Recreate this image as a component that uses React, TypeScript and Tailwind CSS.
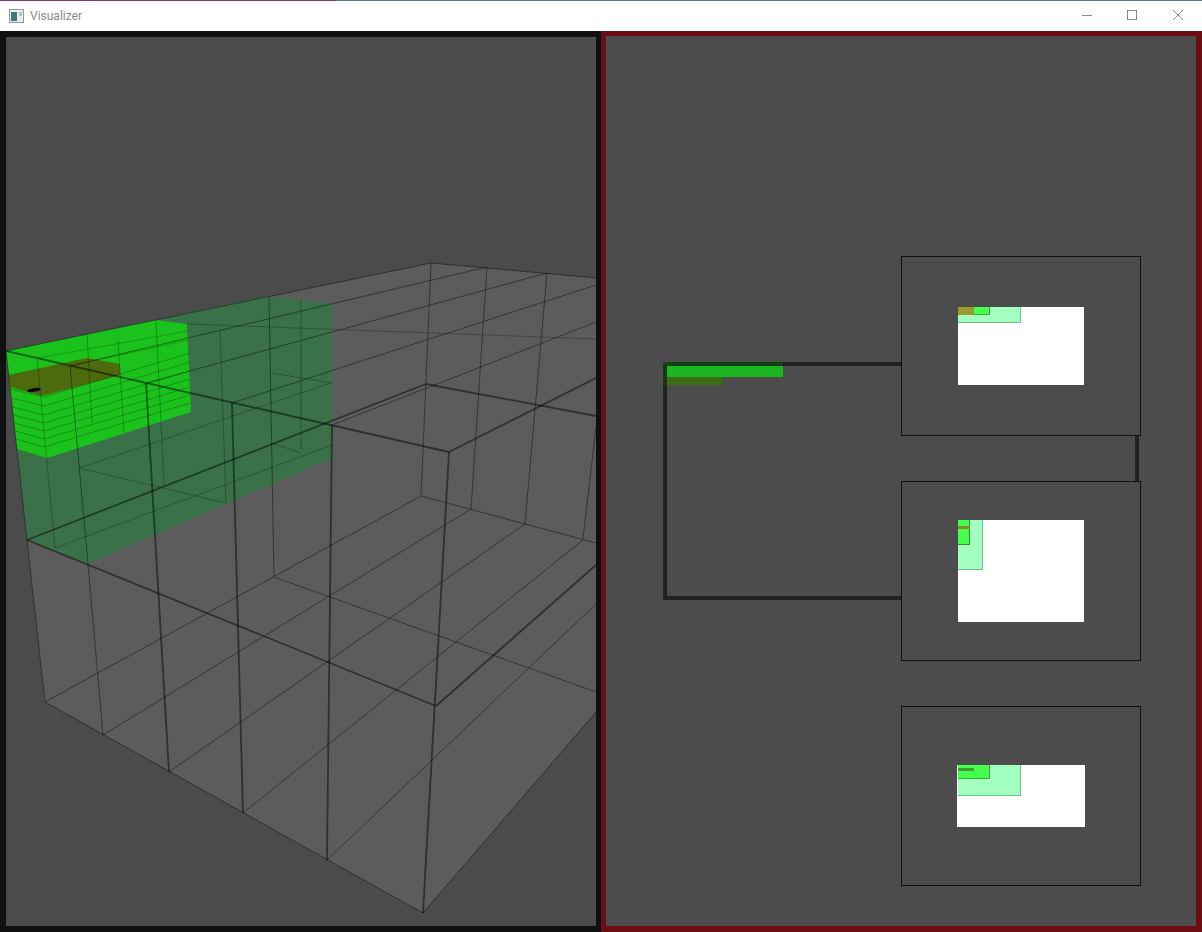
// lines of the wire box, in page coordinates
const thin: number[][] = [
  // top edges
  [6, 351, 431, 263],
  [431, 263, 596, 278],
  // back wall
  [431, 263, 421, 496],
  [487, 267, 471, 509],
  [547, 273, 525, 524],
  [596, 427, 583, 539],
  [421, 496, 596, 543],
  // floor, front to back
  [45, 702, 421, 496],
  [103, 735, 471, 509],
  [169, 772, 525, 524],
  [243, 813, 583, 540],
  [327, 860, 596, 604],
  [423, 913, 596, 712],
  [274, 577, 596, 692],
  // base
  [45, 702, 423, 913],
  // near verticals
  [6, 351, 27, 540],
  [27, 540, 45, 702],
  [70, 366, 88, 564],
  [88, 564, 103, 735],
  [269, 296, 274, 577],
  // receding lines on top
  [70, 366, 487, 267],
  [146, 383, 547, 273],
  [232, 403, 596, 285],
  [332, 425, 596, 322],
];

// the inner layers show through more weakly
const faint: number[][] = [
  [79, 468, 331, 383],
  [55, 548, 332, 445],
  [187, 324, 596, 339],
  [79, 468, 226, 503],
  [272, 373, 332, 383],
  [272, 443, 301, 453],
  [37, 358, 55, 548],
  [156, 320, 164, 485],
  [220, 330, 226, 503],
  [301, 300, 301, 450],
  [87, 335, 92, 423],
  [118, 340, 124, 433],
];

const thick: number[][] = [
  [6, 351, 449, 452],
  [449, 452, 423, 913],
  [449, 452, 596, 378],
  [27, 540, 436, 706],
  [27, 540, 426, 384],
  [426, 384, 596, 416],
  [436, 706, 596, 565],
  [146, 383, 169, 772],
  [232, 403, 243, 813],
  [332, 425, 327, 860],
];

// dense rows on the bright green block, they bend at its front corner
const rows = [389, 398, 407, 415, 423, 431, 439];

function Viewport() {
  return (
    <svg viewBox="6 37 590 889" className="h-full w-full block">
      <polygon points="6,351 431,263 596,278 596,712 423,913 45,702 27,540" fill="#5c5c5c" />
      <polygon points="6,351 269,296 332,304 332,458 88,564 27,539" fill="#3a7149" />
      <polygon points="6,351 156,320 187,324 191,412 47,458 17,449" fill="#1bc21b" />
      <polygon points="8,375 87,358 120,364 120,375 42,396 10,387" fill="#4d6b0c" />
      <ellipse cx="34" cy="390" rx="7" ry="1.8" fill="#0a0505" transform="rotate(-10 34 390)" />
      {rows.map((y) => (
        <polyline
          key={y}
          points={`${10 + (y - 389) / 8},${y} 44,${y + 8} 190,${y - 36}`}
          fill="none"
          stroke="#000"
          strokeOpacity="0.3"
          strokeWidth="0.8"
        />
      ))}
      <line x1="38" y1="358" x2="188" y2="331" stroke="#000" strokeOpacity="0.25" strokeWidth="0.8" />
      <line x1="70" y1="366" x2="188" y2="340" stroke="#000" strokeOpacity="0.25" strokeWidth="0.8" />
      {faint.map((l, i) => (
        <line key={i} x1={l[0]} y1={l[1]} x2={l[2]} y2={l[3]} stroke="#000" strokeOpacity="0.25" strokeWidth="1" />
      ))}
      {thin.map((l, i) => (
        <line key={i} x1={l[0]} y1={l[1]} x2={l[2]} y2={l[3]} stroke="#000" strokeOpacity="0.42" strokeWidth="1" />
      ))}
      {thick.map((l, i) => (
        <line key={i} x1={l[0]} y1={l[1]} x2={l[2]} y2={l[3]} stroke="#000" strokeOpacity="0.48" strokeWidth="1.8" />
      ))}
    </svg>
  );
}

function Preview({ pageClass, children }: { pageClass: string; children: React.ReactNode }) {
  return (
    <div className="w-[240px] h-[180px] border border-[#111] bg-[#4c4c4c] flex items-center justify-center">
      <div className={`relative bg-white ${pageClass}`}>{children}</div>
    </div>
  );
}

export default function App() {
  return (
    <div className="w-[1202px] h-[932px] flex flex-col bg-[#4c4c4c] overflow-hidden font-['Roboto',sans-serif]">
      <div className="h-[31px] shrink-0 bg-white border-t border-[#4d7f8c] relative flex items-center">
        <div className="absolute left-0 -top-px h-px w-[335px] bg-[#8c3560]" />
        <svg width="15" height="14" viewBox="0 0 15 14" className="ml-[9px]">
          <rect x="0.5" y="0.5" width="14" height="13" fill="#e8eeee" stroke="#8f9a9a" />
          <rect x="2" y="3" width="6" height="9" fill="#3c7c78" />
          <rect x="10" y="3" width="3" height="4" fill="#b8c4c4" />
        </svg>
        <span className="ml-[6px] text-xs text-[#8a8a8a]">Visualizer</span>
        <div className="ml-auto mr-px -mt-[2px] flex items-center">
          <svg width="45" height="12" viewBox="0 0 45 12">
            <line x1="17" y1="6.5" x2="27" y2="6.5" stroke="#8a8a8a" />
          </svg>
          <svg width="45" height="12" viewBox="0 0 45 12">
            <rect x="17.5" y="1.5" width="9" height="9" fill="none" stroke="#8a8a8a" />
          </svg>
          <svg width="46" height="12" viewBox="0 0 46 12">
            <path d="M18 1 L28 11 M28 1 L18 11" stroke="#8a8a8a" fill="none" />
          </svg>
        </div>
      </div>
      <div className="flex-1 flex min-h-0">
        <div className="w-[601px] shrink-0 border-[6px] border-r-[5px] border-[#101012] bg-[#4b4b4b]">
          <Viewport />
        </div>
        <div className="relative flex-1 border-[5px] border-r-[6px] border-b-[6px] border-[#6a0e14] bg-[#4c4c4c] flex items-start justify-end pr-[55px] pt-[220px]">
          <div className="absolute left-[57px] top-[326px] w-[476px] h-[238px] border-[4px] border-[#212121]">
            <div className="absolute -left-[4px] -top-[4px] w-[120px] h-[4px] bg-[#123f18]" />
            <div className="absolute -left-[4px] top-0 w-[4px] h-[19px] bg-[#16351a]" />
            <div className="absolute left-0 top-0 w-[116px] h-[11px] bg-[#1cb41f]" />
            <div className="absolute left-0 top-[11px] w-[56px] h-[8px] bg-[#3d6a14]" />
          </div>
          <div className="relative flex flex-col gap-[45px]">
            <Preview pageClass="w-[126px] h-[78px]">
              <div className="absolute left-0 top-0 w-[63px] h-[16px] bg-[#a2ffc0] border-b border-r border-[#6fc08e]" />
              <div className="absolute left-0 top-0 w-[32px] h-[8px] bg-[#44ff4c] border-b border-r border-[#39a83f]" />
              <div className="absolute left-0 top-0 w-[16px] h-[8px] bg-[#9a9a2f]" />
            </Preview>
            <Preview pageClass="w-[126px] h-[102px]">
              <div className="absolute left-0 top-0 w-[25px] h-[50px] bg-[#a2ffc0] border-b border-r border-[#6fc08e]" />
              <div className="absolute left-0 top-0 w-[12px] h-[25px] bg-[#44ff4c] border-b border-r border-[#2f8f38]" />
              <div className="absolute left-0 top-[6px] w-[12px] h-[3px] bg-[#8f8a30]" />
            </Preview>
            <Preview pageClass="w-[128px] h-[62px]">
              <div className="absolute left-px top-0 w-[63px] h-[31px] bg-[#a2ffc0] border-b border-r border-[#6fc08e]" />
              <div className="absolute left-px top-0 w-[32px] h-[14px] bg-[#44ff4c] border-b border-r border-[#39a83f]" />
              <div className="absolute left-px top-[3px] w-[16px] h-[3px] bg-[#3d9f35]" />
            </Preview>
          </div>
        </div>
      </div>
    </div>
  );
}
